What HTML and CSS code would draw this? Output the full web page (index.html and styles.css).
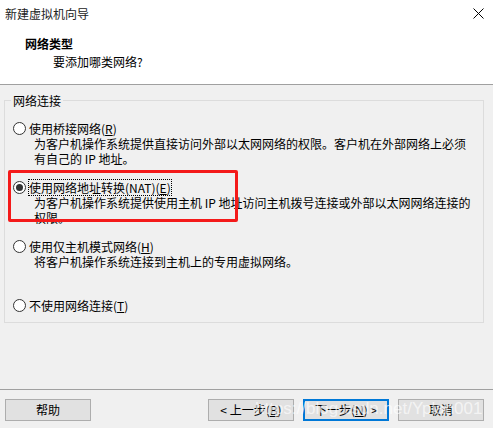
FILE: index.html
```html
<!DOCTYPE html>
<html lang="zh-CN">
<head>
<meta charset="utf-8">
<title>新建虚拟机向导</title>
<link rel="stylesheet" href="styles.css">
</head>
<body>
<div class="window">
  <div class="titlebar">
    <span class="title">新建虚拟机向导</span>
    <svg class="close" width="11" height="11" viewBox="0 0 11 11"><path d="M0.5 0.5 L10.5 10.5 M10.5 0.5 L0.5 10.5" stroke="#000" stroke-width="1" fill="none"/></svg>
  </div>
  <div class="header">
    <div class="h-title">网络类型</div>
    <div class="h-sub">要添加哪类网络?</div>
  </div>
  <div class="main">
    <fieldset class="group">
      <legend>网络连接</legend>
      <div class="opt">
        <div class="opt-row"><span class="radio"></span><span class="lbl">使用桥接网络(<u>R</u>)</span></div>
        <div class="desc">为客户机操作系统提供直接访问外部以太网网络的权限。客户机在外部网络上必须<br>有自己的 IP 地址。</div>
      </div>
      <div class="opt">
        <div class="opt-row"><span class="radio checked"></span><span class="lbl focus">使用网络地址转换(NAT)(<u>E</u>)</span></div>
        <div class="desc">为客户机操作系统提供使用主机 IP 地址访问主机拨号连接或外部以太网网络连接的<br>权限。</div>
      </div>
      <div class="opt">
        <div class="opt-row"><span class="radio"></span><span class="lbl">使用仅主机模式网络(<u>H</u>)</span></div>
        <div class="desc">将客户机操作系统连接到主机上的专用虚拟网络。</div>
      </div>
      <div class="opt last">
        <div class="opt-row"><span class="radio"></span><span class="lbl">不使用网络连接(<u>T</u>)</span></div>
      </div>
    </fieldset>
    <div class="redbox"></div>
  </div>
  <div class="footer">
    <button class="btn">帮助</button>
    <div class="spacer"></div>
    <button class="btn">&lt; 上一步(<u>B</u>)</button>
    <button class="btn primary">下一步(<u>N</u>) &gt;</button>
    <button class="btn">取消</button>
    <div class="watermark">https://blog.csdn.net/Yplan001</div>
  </div>
</div>
</body>
</html>
```
FILE: styles.css
```css
html, body {
  margin: 0;
  padding: 0;
}
body {
  width: 493px;
  height: 428px;
  overflow: hidden;
  background: #f0f0f0;
  font-family: "Noto Sans CJK SC", "Noto Sans", sans-serif;
  font-size: 12px;
  color: #000;
}
.window {
  width: 493px;
  height: 428px;
  display: flex;
  flex-direction: column;
  position: relative;
}
.titlebar {
  height: 28px;
  background: #fff;
  display: flex;
  align-items: center;
  justify-content: space-between;
  padding: 0 9px 2px 5px;
  box-sizing: border-box;
}
.title {
  color: #222;
  line-height: 15px;
}
.close {
  display: block;
}
.header {
  height: 57px;
  box-sizing: border-box;
  background: #fff;
  border-bottom: 1px solid #a0a0a0;
  padding: 8px 0 0 25px;
}
.h-title {
  font-weight: bold;
  line-height: 15px;
}
.h-sub {
  line-height: 15px;
  margin-top: 3px;
  padding-left: 28px;
}
.main {
  height: 304px;
  position: relative;
  padding-top: 8px;
  box-sizing: border-box;
}
.group {
  margin: 0 9px 0 4px;
  padding: 13px 0 9px 0;
  border: 1px solid #dcdcdc;
  min-width: 0;
}
.group legend {
  margin-left: 6px;
  padding: 0 2px;
  line-height: 15px;
}
.opt {
  min-height: 45px;
  margin-bottom: 14px;
}
.opt.last {
  min-height: 15px;
  margin-bottom: 0;
}
.opt-row {
  display: flex;
  align-items: center;
  height: 15px;
  padding-left: 8px;
}
.radio {
  width: 13px;
  height: 13px;
  box-sizing: border-box;
  border: 1px solid #333;
  border-radius: 50%;
  background: #fff;
  display: flex;
  align-items: center;
  justify-content: center;
  margin-right: 3px;
  flex: none;
}
.radio.checked::after {
  content: "";
  width: 7px;
  height: 7px;
  border-radius: 50%;
  background: #333;
}
.lbl {
  line-height: 15px;
}
.lbl u {
  text-underline-offset: 1px;
}
.lbl.focus {
  outline: 1px dotted #000;
  outline-offset: 0;
}
.desc {
  padding-left: 29px;
  line-height: 15px;
}
.redbox {
  position: absolute;
  left: 8px;
  top: 85px;
  width: 230px;
  height: 52px;
  box-sizing: border-box;
  border: 3px solid #f41a1a;
  border-radius: 2px;
}
.footer {
  flex: 1;
  border-top: 1px solid #a0a0a0;
  display: flex;
  align-items: flex-start;
  padding: 9px 9px 0 5px;
  gap: 9px;
  position: relative;
}
.spacer {
  flex: 1;
}
.btn {
  width: 86px;
  height: 22px;
  margin: 0;
  padding: 0;
  border: 1px solid #adadad;
  background: #e1e1e1;
  font-family: inherit;
  font-size: 12px;
  color: #000;
  line-height: 18px;
}
.btn.primary {
  border: 2px solid #0078d7;
}
.watermark {
  position: absolute;
  left: 255px;
  top: 9px;
  font-family: "Liberation Sans", Arial, sans-serif;
  font-size: 17px;
  color: rgba(255, 255, 255, 0.65);
  pointer-events: none;
  white-space: nowrap;
}
```
